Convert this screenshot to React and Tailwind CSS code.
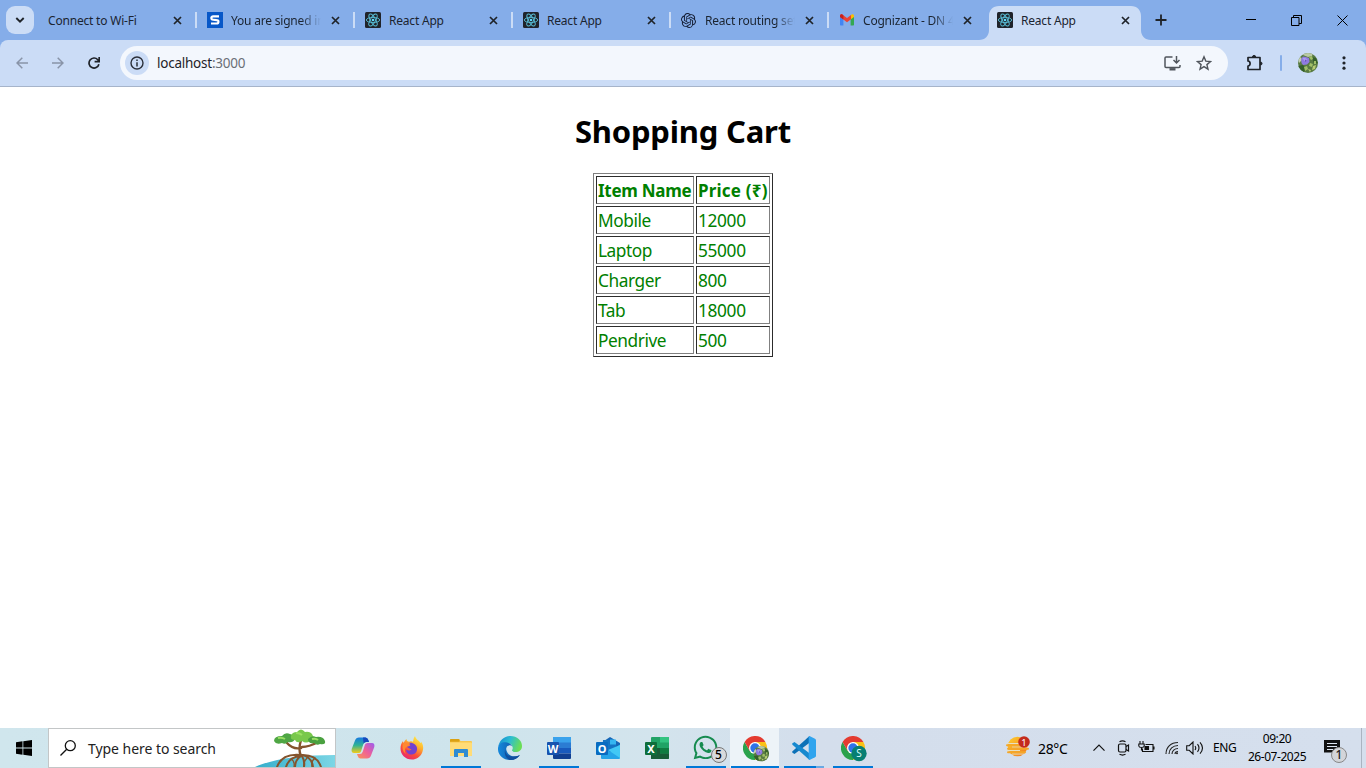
import React from "react";
import { SiOpenai } from "react-icons/si";
import { FaWhatsapp } from "react-icons/fa";

const FONT = "font-['Noto_Sans','Open_Sans',sans-serif]";

function ReactIcon() {
  return (
    <svg width="16" height="16" viewBox="0 0 16 16" className="shrink-0">
      <rect width="16" height="16" rx="1.5" fill="#20232a" />
      <g fill="none" stroke="#58bdd6" strokeWidth="0.9">
        <ellipse cx="8" cy="8" rx="6.7" ry="2.6" />
        <ellipse cx="8" cy="8" rx="6.7" ry="2.6" transform="rotate(60 8 8)" />
        <ellipse cx="8" cy="8" rx="6.7" ry="2.6" transform="rotate(120 8 8)" />
      </g>
      <circle cx="8" cy="8" r="1.3" fill="#61dafb" />
    </svg>
  );
}

function SIcon() {
  return (
    <svg width="16" height="16" viewBox="0 0 16 16" className="shrink-0">
      <rect width="16" height="16" fill="#0757c8" />
      <path d="M12 4.4H6.3C4.6 4.4 4.3 5.2 4.3 6c0 1.1.7 1.6 1.9 1.7l3.4.4c1.2.1 1.9.5 1.9 1.6 0 1-.6 1.8-2 1.8H4" fill="none" stroke="#fff" strokeWidth="2.1" />
    </svg>
  );
}

function GmailIcon() {
  return (
    <svg width="16" height="16" viewBox="0 0 16 16" className="shrink-0">
      <path d="M1 4v8.6c0 .6.4 1 1 1h2.4V6.5z" fill="#4285f4" />
      <path d="M15 4v8.6c0 .6-.4 1-1 1h-2.4V6.5z" fill="#34a853" />
      <path d="M11.6 3.4v4L15 4.900V4c0-1.500-1.500-2.100-2.600-1.300z" fill="#fbbc04" />
      <path d="M1 4c0-1.500 1.500-2.100 2.600-1.300L8 6l4-3v4.200L8 10.200 4.400 7.400 1 4.900z" fill="#ea4335" />
      <path d="M1 4c0-1.500 1.500-2.100 2.600-1.300l.8.6v4.100L1 4.900z" fill="#c5221f" />
    </svg>
  );
}

function Close() {
  return (
    <svg width="9" height="9" viewBox="0 0 9 9" className="shrink-0">
      <path d="M1 1l7 7M8 1L1 8" stroke="#1f2329" strokeWidth="1.7" />
    </svg>
  );
}

const tabs = [
  { title: "Connect to Wi-Fi", divider: true },
  { title: "You are signed in", icon: <SIcon />, fade: true, divider: true },
  { title: "React App", icon: <ReactIcon />, divider: true },
  { title: "React App", icon: <ReactIcon />, divider: true },
  { title: "React routing setup", icon: <SiOpenai size={15} color="#141d33" className="mr-px shrink-0" />, fade: true, divider: true },
  { title: "Cognizant - DN 4.0", icon: <GmailIcon />, fade: true },
  { title: "React App", icon: <ReactIcon />, active: true },
];

function Tab({ title, icon, fade, active, divider }) {
  return (
    <div className="relative flex h-10 w-[158px] shrink-0 items-end">
      {active && (
        <svg className="absolute -left-2 top-1.5" width="172" height="34" viewBox="0 0 172 34">
          <path d="M0 34C6 34 10 30 10 24V10C10 4 14 0 20 0H152C158 0 162 4 162 10V24C162 30 166 34 172 34Z" fill="#cbdcf6" />
        </svg>
      )}
      <div className="relative flex h-[34px] w-full items-center pb-1.5">
        <div className={"flex h-7 items-center gap-2 " + (icon ? "pl-2.5" : "pl-[9px]")}>
          {icon}
          <span
            className={
              "overflow-hidden whitespace-nowrap pt-px text-[12px] leading-5 tracking-[-0.2px] text-[#1b2430] " +
              (icon ? "w-[90px] " : "w-[112px] ") +
              (fade ? "[mask-image:linear-gradient(to_right,black_78%,transparent_100%)]" : "")
            }
          >
            {title}
          </span>
        </div>
        <div className="ml-auto flex w-6 items-center justify-between">
          <Close />
          {divider && <span className="h-4 w-0.5 bg-[#cbdcf6]" />}
        </div>
      </div>
    </div>
  );
}

function TabStrip() {
  return (
    <div className="flex h-10 bg-[#85ade9]">
      <div className="flex w-[39px] shrink-0 items-center pl-1.5">
        <div className="flex h-7 w-7 items-center justify-center rounded-[9px] bg-[#cbdcf6]">
          <svg width="10" height="8" viewBox="0 0 10 8"><path d="M1.300 2L5 5.700 8.700 2" fill="none" stroke="#1f2329" strokeWidth="1.900" /></svg>
        </div>
      </div>
      {tabs.map((t, i) => (
        <Tab key={i} {...t} />
      ))}
      <div className="flex flex-1 items-center pl-2.5">
        <svg width="12" height="12" viewBox="0 0 12 12"><path d="M6 .5v11M.5 6h11" stroke="#1f2329" strokeWidth="1.800" /></svg>
        <div className="ml-auto flex h-10 items-center">
          <div className="flex w-[46px] justify-center">
            <svg width="10" height="10"><path d="M0 4.500h10" stroke="#000" /></svg>
          </div>
          <div className="flex w-[46px] justify-center pr-px">
            <svg width="11" height="11" viewBox="0 0 11 11" fill="none" stroke="#000"><path d="M.5 2.500h7.500v8H.5zM2.500 2.500v-2h8v8h-2.500" /></svg>
          </div>
          <div className="flex w-[46px] justify-center pr-px">
            <svg width="11" height="11" viewBox="0 0 11 11"><path d="M.5.5l10 10M10.500.5l-10 10" stroke="#000" strokeWidth="1" /></svg>
          </div>
        </div>
      </div>
    </div>
  );
}

function Toolbar() {
  return (
    <div className="bg-[#85ade9]">
      <div className="flex h-[47px] items-start rounded-t-lg border-b border-[#a6b4ca] bg-[#cbdcf6] pt-1.5">
        <div className="flex h-[34px] w-[120px] items-center pl-4">
          <svg width="12" height="12" viewBox="0 0 12 12" fill="none" stroke="#8994a8" strokeWidth="1.500"><path d="M12 6H1M6.300.7L1 6l5.300 5.300" /></svg>
          <svg className="ml-6" width="12" height="12" viewBox="0 0 12 12" fill="none" stroke="#8994a8" strokeWidth="1.500"><path d="M0 6h11M5.700.7L11 6l-5.300 5.300" /></svg>
          <svg className="ml-6" width="12" height="12" viewBox="0 0 12 12" fill="none" stroke="#1f2329" strokeWidth="1.700"><path d="M10.900 7.200A5 5 0 1 1 9.800 2.700L11 4M11.200 0v4.600H6.600" /></svg>
        </div>
        <div className="flex h-[34px] w-[1108px] items-center rounded-full bg-[#f3f7fd] pl-[5px] pr-4">
          <div className="flex h-6 w-6 items-center justify-center rounded-full bg-[#cbdcf6]">
            <svg width="14" height="14" viewBox="0 0 14 14"><circle cx="7" cy="7" r="6" fill="none" stroke="#2b303a" strokeWidth="1.400" /><path d="M7 6.200v4.200M7 3.600v1.500" stroke="#2b303a" strokeWidth="1.500" /></svg>
          </div>
          <span className="ml-2 whitespace-nowrap text-[13.5px] leading-5 tracking-[-0.24px] text-[#1f2329]">localhost<span className="text-[#6a6f76]">:3000</span></span>
          <svg className="ml-auto" width="17" height="15" viewBox="0 0 17 15" fill="none" stroke="#50555c" strokeWidth="1.500"><path d="M8.500 1H2Q1 1 1 2v8.500q0 1 1 1h13q1 0 1-1V9M12.500 0v6.500M9.500 4l3 3 3-3" /><path d="M5.500 13.300h6" strokeWidth="2.400" /></svg>
          <svg className="ml-[15px]" width="16" height="16" viewBox="0 0 16 16" fill="none" stroke="#50555c" strokeWidth="1.400"><path d="M8 1.800l1.800 4.300 4.700.4-3.600 3.100 1.100 4.600L8 11.700l-4 2.500 1.100-4.600-3.600-3.100 4.700-.4z" /></svg>
        </div>
        <div className="flex h-[34px] flex-1 items-center">
          <svg className="ml-[18px]" width="18" height="18" viewBox="0 0 18 18" fill="none" stroke="#1f2329" strokeWidth="1.700" strokeLinejoin="round"><path d="M2 3.500H14V15.500H2V12C4.800 12 4.800 7 2 7Z" /><path d="M6.500 3a1.600 1.600 0 0 1 3.200 0zM14.500 8a1.500 1.500 0 0 1 0 3z" fill="#1f2329" strokeWidth="1" /></svg>
          <span className="ml-4 h-4 w-0.5 rounded bg-[#85ade9]" />
          <svg className="ml-4" width="20" height="20" viewBox="0 0 20 20">
            <defs><clipPath id="avatar"><circle cx="10" cy="10" r="10" /></clipPath></defs>
            <Flower />
          </svg>
          <svg className="ml-[24px]" width="4" height="14" viewBox="0 0 4 14" fill="#1f2329"><circle cx="2" cy="1.800" r="1.600" /><circle cx="2" cy="7" r="1.600" /><circle cx="2" cy="12.200" r="1.600" /></svg>
        </div>
      </div>
    </div>
  );
}

function Flower() {
  return (
    <g clipPath="url(#avatar)">
      <rect width="20" height="20" fill="#587b43" />
      <path d="M5 0h10l-1 3-4 1-5-2z" fill="#b9c9a4" />
      <path d="M0 6l3-2 1 3-3 3z" fill="#c3cfb0" />
      <path d="M0 13l5-1 3 4-3 4H0zM14 4l4 1 2 5-4 1z" fill="#35602b" />
      <path d="M11 4l3-1 1 3-2 1zM12 10l3 1-1 3-3-1zM6 14l3-1 1 3-3 2zM16 8l2 0 0 3-2 0z" fill="#a0bf68" />
      <path d="M15 13l3-1-1 4-3 1zM10 16l3 1-1 2z" fill="#b7cd74" />
      <path d="M3 6l2-2.500 3 .5 3 1 .5 4-2.500 2.500-4 .5L3.500 10z" fill="#8f7be0" />
      <path d="M4.500 5l3 0 2 2-3 1z" fill="#ab9dee" />
      <path d="M7 6.500l1.500 1L7.500 9z" fill="#5b41b2" />
    </g>
  );
}

const items = [["Mobile", 12000], ["Laptop", 55000], ["Charger", 800], ["Tab", 18000], ["Pendrive", 500]];
const cell = "h-7 border border-t-[#2c2c2c] border-l-[#2c2c2c] border-r-[#808080] border-b-[#808080] px-px pb-0 pt-0.5 text-left whitespace-nowrap leading-6";

function Cart() {
  return (
    <main className="flex flex-1 flex-col items-center bg-white">
      <h1 className="mt-[23px] h-[43px] whitespace-nowrap text-[31px] font-bold leading-[43px] tracking-[-0.2px] text-black">Shopping Cart</h1>
      <table className="mt-5 w-[180px] table-fixed border-separate border-spacing-[2px] border border-t-[#808080] border-l-[#808080] border-b-[#2c2c2c] border-r-[#2c2c2c] text-[17.3px] text-[#008000]">
        <thead>
          <tr>
            <th className={cell + " w-[98px] text-[17px] tracking-[-0.28px]"}>Item Name</th>
            <th className={cell + " w-[74px] text-[17px] tracking-[0.2px]"}>Price (₹)</th>
          </tr>
        </thead>
        <tbody>
          {items.map(([name, price]) => (
            <tr key={name}>
              <td className={cell + " tracking-[-0.45px]"}>{name}</td>
              <td className={cell + " tracking-[-0.35px]"}>{price}</td>
            </tr>
          ))}
        </tbody>
      </table>
    </main>
  );
}

function Copilot() {
  return (
    <svg width="24" height="22" viewBox="0 0 24 22">
      <defs>
        <linearGradient id="cpa" x1="0" y1="0" x2="0" y2="1"><stop stopColor="#1679e0" /><stop offset=".5" stopColor="#2eb394" /><stop offset="1" stopColor="#f3cc19" /></linearGradient>
        <linearGradient id="cpb" x1="1" y1="0" x2="0" y2="1"><stop stopColor="#9b5cf0" /><stop offset=".5" stopColor="#ee6098" /><stop offset="1" stopColor="#fb9455" /></linearGradient>
      </defs>
      <path d="M8 .5h6.500q2 0 2.800 2.500l.7 2h-3q-2 0-2.800 2.500L10 14.500Q9.300 16 7.500 16H3Q0 16 .7 12L4 3.500Q5 .5 8 .5z" fill="url(#cpa)" />
      <path d="M16 21.500H9.500q-2 0-2.800-2.500L6 17h3q2 0 2.800-2.500L14 7.500Q14.700 6 16.500 6H21q3 0 2.300 4L20 18.500q-1 3-4 3z" fill="url(#cpb)" />
      <path d="M12 .5h2.500q2 0 2.800 2.500l.7 2h-3q-1.500 0-2.400 1.500z" fill="#1648bd" />
    </svg>
  );
}

function Firefox() {
  return (
    <svg width="24" height="24" viewBox="0 0 24 24">
      <defs><linearGradient id="ff" x1=".85" y1=".05" x2=".3" y2="1"><stop stopColor="#fff04a" /><stop offset=".35" stopColor="#ffb22e" /><stop offset=".7" stopColor="#fb4b3b" /><stop offset="1" stopColor="#e52672" /></linearGradient></defs>
      <path d="M15 0c1 4 4 4 5.500 7 1-.1.500-1.500.500-1.500 3 4 2.500 8 1 11.500-2 4-5.500 6.500-10 6.500C5 23.500.5 18.500.5 12.500c0-3.500 1-5.500 2.500-7.500 0 1 .3 1.500.8 1.800C4.500 5 5.500 4 6.500 3c0 2 1 2.500 3 2.800 1.500-.8 2.500-.6 3.500 0 .5-2 .5-4 2-5.800z" fill="url(#ff)" />
      <path d="M6 8.500c2-2 6-2.500 9 0 3.500 3 2.500 8.500-2 9.800-3.500 1-7-1.300-6.800-4.800 1.800 1.800 4.300 1.200 5.300-.3-2 0-3-1.500-4.500-2.200 1-.7 2.500-1 3.500-1.800-1.200-.8-2.700-.8-4.500-.7z" fill="#7442cf" />
      <path d="M4 6.800c2-.8 4.500-.3 6.200.7.2 1.500-2.700 1.700-3.200 3.100-2 .9-3 4.400-1 7.400-4-3-4.500-8-2-11.200z" fill="#ff8931" />
    </svg>
  );
}

function Explorer() {
  return (
    <svg width="22" height="18" viewBox="0 0 22 18">
      <path d="M0 1q0-1 1-1h8l1.500 2H21q1 0 1 1v13q0 1-1 1H1q-1 0-1-1z" fill="#f8c84f" />
      <path d="M0 1q0-1 1-1h7.500q1 0 1 1v1.800H0z" fill="#dba112" />
      <path d="M0 3.500h21q1 0 1 1v11.500q0 1-1 1H1q-1 0-1-1z" fill="#ffdc77" />
      <path d="M4 18v-7q0-1 1-1h12q1 0 1 1v7h-4v-4H8v4z" fill="#2f8cd2" />
    </svg>
  );
}

function Edge() {
  return (
    <svg width="24" height="24" viewBox="0 0 24 24">
      <defs>
        <linearGradient id="eg" x1="0" x2="1" y1=".1" y2=".4"><stop stopColor="#1288d3" /><stop offset=".5" stopColor="#2dbdd1" /><stop offset="1" stopColor="#6bde55" /></linearGradient>
        <linearGradient id="ed" x1="0" x2="1"><stop stopColor="#1689dc" /><stop offset="1" stopColor="#0c4b99" /></linearGradient>
      </defs>
      <path d="M.2 11C1.200 4.500 6 0 12.500 0 19 0 24 4.500 24 10c0 4-3 6-6.500 6-3 0-4-1-3.500-2 2-4-1.500-7-5-7-4 0-8 1-8.800 4z" fill="url(#eg)" />
      <path d="M0 12c.5-4.500 5-6.500 9-5.500 2.500.5 4.500 2 5 4-1-1-3-1.500-4.500-.5-2 1.500-1.500 5 .5 7.500 3 3.500 8 3.500 12 1.500C20 22 16.500 24 12.500 24 5 24-.5 19 0 12z" fill="url(#ed)" />
      <path d="M9.500 10c-4 3-2.500 9.500 3.500 10.500 4 .6 7-.3 8.800-1.500-2.300 3.500-5.800 5-9.300 5C7 23 4.500 14.700 9.500 10z" fill="#104f9e" />
      <path d="M14 14.200c1-2 .3-4.200-1.500-4.700-2-.3-3.500 2-3 4.500.6 2.500 3 4 6 4.500 3 .2 5-.8 6.500-2.500-4 1-8 .3-8-1.800z" fill="#d3e6ee" />
    </svg>
  );
}

function OfficeLetter({ fill, children }) {
  return (
    <>
      <rect x="0" y="5" width="12" height="13" rx="1" fill={fill} />
      <text x="6" y="15.500" textAnchor="middle" className="font-['Noto_Sans',sans-serif] font-bold" fontSize="11" fill="#fff">{children}</text>
    </>
  );
}

function Word() {
  return (
    <svg width="24" height="22" viewBox="0 0 24 22">
      <path d="M6 0h18v6H6z" fill="#3aa2ec" /><path d="M6 5.500h18v5.500H6z" fill="#2b7cd3" /><path d="M6 11h18v5.500H6z" fill="#185abd" /><path d="M6 16.500h18V21q0 1-1 1H7q-1 0-1-1z" fill="#103f91" />
      <OfficeLetter fill="#1753ae">W</OfficeLetter>
    </svg>
  );
}

function Outlook() {
  return (
    <svg width="24" height="22" viewBox="0 0 24 22">
      <path d="M5 6L14 0l10 6v12H5z" fill="#1566b7" />
      <path d="M7 3h13v12H7z" fill="#1474c4" /><path d="M14 2.500h6v5h-6z" fill="#35b5f1" />
      <path d="M5 9l9.500 6L24 7.500V21q0 1-1 1H6q-1 0-1-1z" fill="#26a4e8" />
      <path d="M24 8v13L12 13z" fill="#42c8f5" />
      <OfficeLetter fill="#096cc1">O</OfficeLetter>
    </svg>
  );
}

function Excel() {
  return (
    <svg width="24" height="22" viewBox="0 0 24 22">
      <rect x="6" width="18" height="22" rx="1" fill="#21a366" /><path d="M15 0h8q1 0 1 1v4.500h-9z" fill="#33c481" /><path d="M6 11h9v11H7q-1 0-1-1z" fill="#185c37" /><path d="M15 11h9v5.500h-9z" fill="#107c41" /><path d="M6 16.500h18V21q0 1-1 1H7q-1 0-1-1z" fill="#185c37" />
      <OfficeLetter fill="#0e6e3b">X</OfficeLetter>
    </svg>
  );
}

function ChromeIcon({ children }) {
  return (
    <svg width="26" height="26" viewBox="0 0 26 26">
      <path d="M1.600 6A12 12 0 0 0 12 24L17.200 15 12 12 6.800 15z" fill="#2ba24c" />
      <path d="M22.400 6A12 12 0 0 1 12 24L17.200 15 12 6z" fill="#fbc116" />
      <path d="M12 6h10.400A12 12 0 0 0 1.600 6L6.800 15z" fill="#e43b30" />
      <circle cx="12" cy="12" r="6" fill="#fff" /><circle cx="12" cy="12" r="4.700" fill="#2f73e8" />
      {children}
    </svg>
  );
}

function VsCode() {
  return (
    <svg width="24" height="24" viewBox="0 0 24 24">
      <path d="M17.500 0v6.800L2.500 18 .5 16.700q-.7-.7 0-1.400z" fill="#0d71b7" />
      <path d="M17.500 24v-6.800L2.500 6 .5 7.300q-.7.7 0 1.400z" fill="#1689cf" />
      <path d="M17.500 0L23 2.700q1 .5 1 1.500v15.600q0 1-1 1.500L17.500 24q-.8-.2-.8-1V1q0-.8.8-1z" fill="#30a4ee" />
    </svg>
  );
}

const apps = [
  { icon: <Copilot /> },
  { icon: <Firefox /> },
  { icon: <Explorer />, bar: "w-10" },
  { icon: <Edge /> },
  { icon: <Word />, bar: "w-10" },
  { icon: <Outlook /> },
  { icon: <Excel /> },
  {
    icon: (
      <span className="relative block h-6 w-6">
        <FaWhatsapp size={27} color="#168b50" className="absolute -left-[2px] -top-[2px]" />
        <span className="absolute left-[17px] top-[11px] flex h-4 w-4 items-center justify-center rounded-full border border-[#777] bg-[#d7dadd] text-[12px] font-medium leading-none text-black">5</span>
      </span>
    ),
    bar: "w-10",
  },
  {
    icon: (
      <span className="relative block h-6 w-6">
        <ChromeIcon><g transform="translate(10.500 10) scale(.78)"><Flower /></g></ChromeIcon>
      </span>
    ),
    bar: "w-12",
    active: true,
  },
  { icon: <VsCode />, bar: "w-10", split: true },
  {
    icon: (
      <span className="relative block h-6 w-6">
        <ChromeIcon>
          <circle cx="18" cy="17.500" r="7.700" fill="#087f73" />
          <text x="18" y="21" textAnchor="middle" fontSize="10" className="font-['Noto_Sans',sans-serif]" fill="#dff">S</text>
        </ChromeIcon>
      </span>
    ),
    bar: "w-10",
  },
];

function SearchTree() {
  return (
    <svg className="ml-auto" width="80" height="38" viewBox="0 0 80 38">
      <defs><linearGradient id="sea" x1="0" x2="1"><stop stopColor="#35aecb" /><stop offset="1" stopColor="#7cd6e5" /></linearGradient></defs>
      <path d="M0 38C18 30 45 26 80 26V38z" fill="url(#sea)" />
      <g fill="none" stroke="#85542d" strokeLinecap="round">
        <path d="M46 27Q43 21 46 11M46 19Q38 21 31 13M47 18q7 0 16-5" strokeWidth="2.400" />
        <path d="M46 26Q27 24 22 38M45 27Q34 28 31 38M46 27q-6 4-6 11M47 27q3 5 2 11M47 26q10 2 11 12M48 26q14 0 18 12" strokeWidth="2" />
        <path d="M36 30q4 2 3 8M52 29q-4 4-3 9M60 29q-4 3-3 9" strokeWidth="1.300" />
      </g>
      <path d="M19 12q0-5 8-5 3-4 8-2 5 1 5 5-2 4-7 3-3 3-6 1-6 2-8-2z" fill="#4fa644" />
      <path d="M36 7q1-4 6-4 4-5 8 0 6-1 8 4 3 5-3 5-4 3-8 0-5 3-7-1-5 0-4-4z" fill="#79c84c" />
      <path d="M53 10q4-4 8-2 7-1 9 4 1 4-5 3-3 2-6-1-6 1-6-4z" fill="#4aa140" />
      <path d="M23 9q4-1 7 1M41 4q4 0 6 2M57 10q4-1 6 1" stroke="#9be064" strokeWidth="2" fill="none" />
    </svg>
  );
}

function Tray() {
  return (
    <div className="ml-auto flex h-10 w-[361px] items-center text-black">
      <svg className="ml-px mr-px shrink-0" width="25" height="24" viewBox="0 0 25 24">
        <defs><linearGradient id="sun" x1="0" y1="0" x2="1" y2="1"><stop stopColor="#ffd02f" /><stop offset="1" stopColor="#ef761d" /></linearGradient></defs>
        <circle cx="11.500" cy="10.500" r="9.800" fill="url(#sun)" />
        <path d="M1 7.500h12M6 11h16M1 14.500h13M6 18h12" stroke="#e6e0c4" strokeWidth="1" />
        <path d="M1 9.300h15M2 12.800h20M2 16.300h17" stroke="#f5a728" strokeWidth="1.900" strokeLinecap="round" />
        <circle cx="18" cy="6" r="5.800" fill="#c42b1c" />
        <text x="18" y="9.500" textAnchor="middle" fontSize="9.500" fill="#fff" className="font-['Noto_Sans',sans-serif]">1</text>
      </svg>
      <span className="ml-1.5 w-[55px] whitespace-nowrap pt-px text-[14px] leading-5 tracking-[-0.35px]">28°C</span>
      <svg width="12" height="8" viewBox="0 0 12 8"><path d="M.5 6.700L6 1.200l5.500 5.500" stroke="#111" strokeWidth="1.200" fill="none" /></svg>
      <svg className="ml-3" width="14" height="16" viewBox="0 0 14 16" fill="none" stroke="#111" strokeWidth="1.200"><rect x="1.500" y="4" width="7.500" height="8" rx="1.500" /><path d="M9 6.500l2.500-1.500v6L9 9.500M2.500 1.700q3-1.500 6 0M2.500 14.300q3 1.500 6 0" /></svg>
      <svg className="ml-[7px]" width="17" height="14" viewBox="0 0 17 14" fill="none" stroke="#111" strokeWidth="1.100"><path d="M7.500 3.500H15v7H4.500v-3M16 5.500v3M2 0v3M5 0v3M.8 3h5.400v2Q6 6.500 3.500 6.500T.8 5zM3.500 6.500v3" /><path d="M7 5.500h3.500v3H7z" fill="#111" /></svg>
      <svg className="ml-[10px]" width="14" height="14" viewBox="0 0 14 14" fill="none" stroke="#222" strokeWidth="1.100"><path d="M1 13C1 6 6 1.500 13 1.500M4 13c0-5 4-8.500 9-8.500M7 13c0-3 2.500-5.500 6-5.500M10 13q0-2.500 3-2.500" /><circle cx="12" cy="12.300" r="1" fill="#222" stroke="none" /></svg>
      <svg className="ml-[7px]" width="18" height="14" viewBox="0 0 18 14" fill="none" stroke="#111" strokeWidth="1.100"><path d="M.7 4.700h2.500L7 1v12L3.200 9.300H.7zM9 5q1.500 2 0 4M11.500 3.200q3 3.800 0 7.600M14 1.400q5 5.600 0 11.200" /></svg>
      <span className="ml-[9px] w-7 whitespace-nowrap text-[12px] leading-5 tracking-[-0.4px]">ENG</span>
      <span className="ml-[3px] flex w-[66px] flex-col items-center whitespace-nowrap text-[12px] leading-[18px] tracking-[-0.45px]">
        <span>09:20</span>
        <span>26-07-2025</span>
      </span>
      <span className="relative ml-[14px] h-6 w-6">
        <svg className="absolute left-0 top-[3px]" width="17" height="18" viewBox="0 0 17 18"><path d="M0 1h16v12.500h-3v4l-4-4H0z" fill="#111" /><path d="M3 4.500h10M3 7.500h10M3 10.500h6" stroke="#dce4ef" strokeWidth="1.100" /></svg>
        <span className="absolute left-[7px] top-[11px] flex h-4 w-4 items-center justify-center rounded-full border border-[#888] bg-[#d3d5d9] text-[12px] font-medium leading-none text-[#222]">1</span>
      </span>
      <span className="ml-auto mr-1 h-10 w-px bg-[#aab4c1]" />
    </div>
  );
}

function Taskbar() {
  return (
    <footer className="flex h-10 bg-[linear-gradient(90deg,#d0e6ed_0%,#cee4ec_35%,#d3e4ed_48%,#d4deec_60%,#d5dfed_100%)]">
      <div className="flex w-12 shrink-0 items-center justify-center">
        <svg width="16" height="16" viewBox="0 0 16 16"><path d="M0 2.300L6.500 1.300V7.600H0zM7.300 1.200L16 0v7.600H7.300zM0 8.400h6.500v6.300L0 13.700zM7.300 8.400H16V16l-8.700-1.200z" /></svg>
      </div>
      <div className="flex h-10 w-72 shrink-0 items-center border border-[#c3c6c7] bg-white pl-[11px]">
        <svg width="16" height="16" viewBox="0 0 16 16" fill="none" stroke="#111" strokeWidth="1.300"><circle cx="10.300" cy="5.700" r="5" /><path d="M6.700 9.300L.5 15.500" /></svg>
        <span className="ml-3 whitespace-nowrap pt-0.5 text-[14px] leading-5 tracking-[-0.05px] text-[#222]">Type here to search</span>
        <SearchTree />
      </div>
      <div className="ml-0.5 flex shrink-0">
        {apps.map((a, i) => (
          <div key={i} className={"flex w-[49px] flex-col items-center " + (a.active ? "bg-[#edf3f8]" : "")}>
            <div className="flex h-[38px] items-center pt-0.5">{a.icon}</div>
            {a.bar && (
              <div className={"h-0.5 " + a.bar + (a.split ? " bg-[linear-gradient(90deg,#0078d7_80%,#69a9e3_80%)]" : " bg-[#0078d7]")} />
            )}
          </div>
        ))}
      </div>
      <Tray />
    </footer>
  );
}

export default function App() {
  return (
    <div className={"flex h-screen w-full flex-col overflow-hidden bg-white " + FONT}>
      <TabStrip />
      <Toolbar />
      <Cart />
      <Taskbar />
    </div>
  );
}
